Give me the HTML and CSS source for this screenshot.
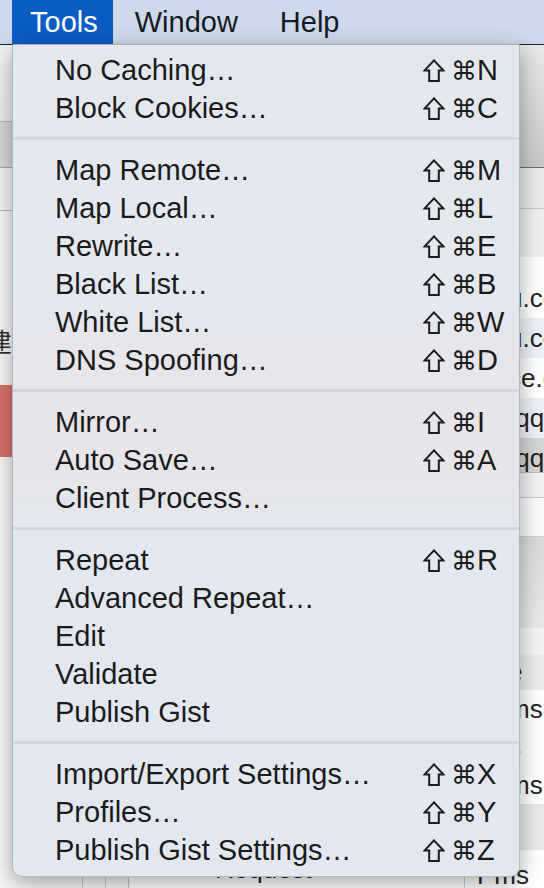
FILE: index.html
```html
<!DOCTYPE html>
<html>
<head>
<meta charset="utf-8">
<link rel="stylesheet" href="styles.css">
</head>
<body>
<div class="desktop">
  <header class="menubar">
    <span class="mb-item active">Tools</span>
    <span class="mb-item">Window</span>
    <span class="mb-item">Help</span>
  </header>
  <div class="window">
    <div class="col col-left">
      <div class="r r-tool"></div>
      <div class="r r-grey"></div>
      <div class="r r-light"></div>
      <div class="r r-side"><span class="cjk">创建</span></div>
      <div class="r r-red"></div>
      <div class="r r-rest"></div>
      <div class="r r-bottom"><span class="vl"></span><span class="vl"></span><span class="vl"></span></div>
    </div>
    <div class="col col-mid">
      <div class="r r-midfill"></div>
      <div class="r r-midbottom"><span class="req">Request</span></div>
    </div>
    <div class="col col-right">
      <div class="r r-rtool"></div>
      <div class="r r-rbar"></div>
      <div class="r r-rhead"></div>
      <div class="r r-row">u.com</div>
      <div class="r r-row alt">u.com</div>
      <div class="r r-row">ce.com</div>
      <div class="r r-row alt">.qq.com</div>
      <div class="r r-row sel">.qq.com</div>
      <div class="r r-gap"></div>
      <div class="r r-white"></div>
      <div class="r r-greybox"></div>
      <div class="r r-white2"></div>
      <div class="r r-row2 head">e</div>
      <div class="r r-row2">ms</div>
      <div class="r r-row2">s</div>
      <div class="r r-row2">ms</div>
      <div class="r r-greybox2"></div>
      <div class="r r-row2 last">Pms</div>
    </div>
  </div>
</div>

<div class="menu">
  <div class="item"><span class="label">No Caching…</span><span class="key"><svg class="sh" viewBox="0 0 22 23"><path d="M11 1.4 L20.6 11.6 H15.8 V21.9 H6.2 V11.6 H1.4 Z"/></svg><span class="cm">⌘</span><span class="k">N</span></span></div>
  <div class="item"><span class="label">Block Cookies…</span><span class="key"><svg class="sh" viewBox="0 0 22 23"><path d="M11 1.4 L20.6 11.6 H15.8 V21.9 H6.2 V11.6 H1.4 Z"/></svg><span class="cm">⌘</span><span class="k">C</span></span></div>
  <div class="sep"></div>
  <div class="item"><span class="label">Map Remote…</span><span class="key"><svg class="sh" viewBox="0 0 22 23"><path d="M11 1.4 L20.6 11.6 H15.8 V21.9 H6.2 V11.6 H1.4 Z"/></svg><span class="cm">⌘</span><span class="k">M</span></span></div>
  <div class="item"><span class="label">Map Local…</span><span class="key"><svg class="sh" viewBox="0 0 22 23"><path d="M11 1.4 L20.6 11.6 H15.8 V21.9 H6.2 V11.6 H1.4 Z"/></svg><span class="cm">⌘</span><span class="k">L</span></span></div>
  <div class="item"><span class="label">Rewrite…</span><span class="key"><svg class="sh" viewBox="0 0 22 23"><path d="M11 1.4 L20.6 11.6 H15.8 V21.9 H6.2 V11.6 H1.4 Z"/></svg><span class="cm">⌘</span><span class="k">E</span></span></div>
  <div class="item"><span class="label">Black List…</span><span class="key"><svg class="sh" viewBox="0 0 22 23"><path d="M11 1.4 L20.6 11.6 H15.8 V21.9 H6.2 V11.6 H1.4 Z"/></svg><span class="cm">⌘</span><span class="k">B</span></span></div>
  <div class="item"><span class="label">White List…</span><span class="key"><svg class="sh" viewBox="0 0 22 23"><path d="M11 1.4 L20.6 11.6 H15.8 V21.9 H6.2 V11.6 H1.4 Z"/></svg><span class="cm">⌘</span><span class="k">W</span></span></div>
  <div class="item"><span class="label">DNS Spoofing…</span><span class="key"><svg class="sh" viewBox="0 0 22 23"><path d="M11 1.4 L20.6 11.6 H15.8 V21.9 H6.2 V11.6 H1.4 Z"/></svg><span class="cm">⌘</span><span class="k">D</span></span></div>
  <div class="sep"></div>
  <div class="item"><span class="label">Mirror…</span><span class="key"><svg class="sh" viewBox="0 0 22 23"><path d="M11 1.4 L20.6 11.6 H15.8 V21.9 H6.2 V11.6 H1.4 Z"/></svg><span class="cm">⌘</span><span class="k">I</span></span></div>
  <div class="item"><span class="label">Auto Save…</span><span class="key"><svg class="sh" viewBox="0 0 22 23"><path d="M11 1.4 L20.6 11.6 H15.8 V21.9 H6.2 V11.6 H1.4 Z"/></svg><span class="cm">⌘</span><span class="k">A</span></span></div>
  <div class="item"><span class="label">Client Process…</span><span class="key"></span></div>
  <div class="sep"></div>
  <div class="item"><span class="label">Repeat</span><span class="key"><svg class="sh" viewBox="0 0 22 23"><path d="M11 1.4 L20.6 11.6 H15.8 V21.9 H6.2 V11.6 H1.4 Z"/></svg><span class="cm">⌘</span><span class="k">R</span></span></div>
  <div class="item"><span class="label">Advanced Repeat…</span><span class="key"></span></div>
  <div class="item"><span class="label">Edit</span><span class="key"></span></div>
  <div class="item"><span class="label">Validate</span><span class="key"></span></div>
  <div class="item"><span class="label">Publish Gist</span><span class="key"></span></div>
  <div class="sep"></div>
  <div class="item"><span class="label">Import/Export Settings…</span><span class="key"><svg class="sh" viewBox="0 0 22 23"><path d="M11 1.4 L20.6 11.6 H15.8 V21.9 H6.2 V11.6 H1.4 Z"/></svg><span class="cm">⌘</span><span class="k">X</span></span></div>
  <div class="item"><span class="label">Profiles…</span><span class="key"><svg class="sh" viewBox="0 0 22 23"><path d="M11 1.4 L20.6 11.6 H15.8 V21.9 H6.2 V11.6 H1.4 Z"/></svg><span class="cm">⌘</span><span class="k">Y</span></span></div>
  <div class="item"><span class="label">Publish Gist Settings…</span><span class="key"><svg class="sh" viewBox="0 0 22 23"><path d="M11 1.4 L20.6 11.6 H15.8 V21.9 H6.2 V11.6 H1.4 Z"/></svg><span class="cm">⌘</span><span class="k">Z</span></span></div>
</div>
</body>
</html>
```

FILE: styles.css
```css
* { box-sizing: border-box; }
html, body { margin: 0; padding: 0; }
body {
  width: 544px;
  height: 888px;
  overflow: hidden;
  position: relative;
  font-family: "Liberation Sans", Arial, sans-serif;
  background: #f2f2f2;
}

.desktop { display: flex; flex-direction: column; height: 888px; }

.menubar {
  height: 45px;
  flex: none;
  display: flex;
  padding-left: 12px;
  background: #cedaeb;
  border-bottom: 1px solid #17253a;
  font-size: 29px;
  line-height: 44px;
  color: #151b26;
}
.mb-item { padding: 0 20px 0 22px; }
.mb-item.active {
  background: #0b5dc4;
  color: #fff;
  padding: 0 15px 0 18px;
}

.window { flex: 1; display: flex; min-height: 0; }
.col { display: flex; flex-direction: column; }
.col-left { width: 130px; }
.col-mid { flex: 1; }
.col-right { width: 79px; font-size: 26px; color: #222; }
.r { flex: none; }

.r-tool { height: 77px; background: linear-gradient(#f4f4f4, #ececec); border-bottom: 1px solid #b6b6b6; }
.r-grey { height: 46px; background: #d8d8d8; border-bottom: 1px solid #a5a5a5; }
.r-light { height: 43px; background: #f5f5f5; border-bottom: 1px solid #bcbcbc; }
.r-side { height: 174px; background: #f7f7f7; position: relative; overflow: hidden; }
.cjk {
  position: absolute; right: 118px; top: 112px;
  white-space: nowrap;
  font-family: "Noto Sans CJK SC", sans-serif; font-size: 26px; line-height: 36px; color: #333;
}
.r-red { height: 72px; background: #d9736b; }
.r-rest { flex: 1; background: linear-gradient(90deg, #f7f7f7, #e8e8e8); }
.r-bottom { height: 12px; background: #f6f6f6; display: flex; padding-left: 82px; gap: 22px; }
.vl { width: 1px; background: #c8c8c8; }

.r-midfill { flex: 1; background: #f0f0f0; }
.r-midbottom { height: 12px; background: #fff; position: relative; border-right: 1px solid #c9c9c9; overflow: hidden; }
.req { position: absolute; left: 85px; top: -22px; font-size: 26px; color: #222; }

.r-rtool { height: 123px; background: linear-gradient(#e8e8e8, #c8c8c8); border-bottom: 1px solid #6b6b6b; }
.r-rbar { height: 41px; background: #eaeaea; border-bottom: 1px solid #c9c9c9; }
.r-rhead { height: 69px; background: linear-gradient(#efefef 70%, #fff 70%); }
.r-row, .r-row2 { height: 40px; line-height: 40px; padding-left: 43px; white-space: nowrap; overflow: hidden; background: #fff; }
.r-row.alt { background: #eef2f8; }
.r-row.sel { height: 35px; line-height: 40px; background: #d5d5d5; border-bottom: 1px solid #bbb; }
.r-gap { height: 25px; background: #f2f2f2; border-bottom: 1px solid #c4c4c4; }
.r-white { height: 39px; background: #fafafa; border-bottom: 1px solid #cfcfcf; }
.r-greybox { height: 91px; background: linear-gradient(#dadada, #e9e9e9); }
.r-white2 { height: 27px; background: #f4f4f4; }
.r-row2 { height: 38px; line-height: 38px; }
.r-row2.head { height: 35px; line-height: 35px; background: #ededed; }
.r-greybox2 { height: 46px; background: #e9e9e9; }
.r-row2.last { flex: 1; padding-left: 12px; line-height: 50px; }

/* Menu */
.menu {
  position: absolute;
  left: 12px;
  top: 44px;
  width: 508px;
  height: 833px;
  padding: 6px 0 7px;
  background: linear-gradient(#e3e8ef 0%, #e4e8ef 30%, #e7e5ea 42%, #e6e5ea 52%, #e3e8f0 60%, #e3e8f0 100%);
  border: 1px solid rgba(0, 0, 0, 0.2);
  border-top-color: #a8b0bc;
  border-radius: 0 0 10px 10px;
  box-shadow: 0 6px 22px rgba(0, 0, 0, 0.35);
  color: #1b1b1b;
  font-size: 29px;
}
.item {
  height: 38px;
  line-height: 38px;
  display: grid;
  grid-template-columns: 1fr 96px;
  padding-left: 42px;
  white-space: nowrap;
}
.key { display: flex; align-items: baseline; }
.sh {
  width: 22px;
  height: 23px;
  margin-right: 6px;
  flex: none;
  align-self: center;
  position: relative;
  top: 0;
  fill: none;
  stroke: #1b1b1b;
  stroke-width: 2;
  stroke-linejoin: miter;
}
.cm {
  font-family: "DejaVu Sans", sans-serif;
  font-size: 26px;
  width: 26px;
}
.sep { height: 24px; padding-top: 10px; }
.sep::before { content: ""; display: block; height: 3px; background: #d3d7de; }
```
